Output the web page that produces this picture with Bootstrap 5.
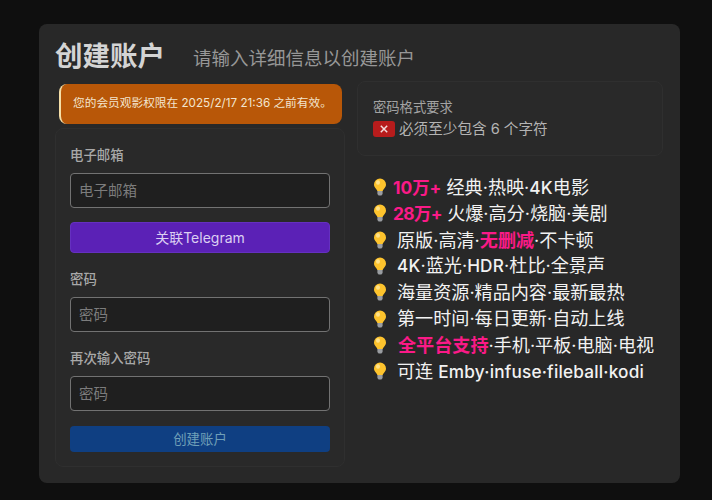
<!DOCTYPE html>
<html lang="zh-CN">
<head>
    <meta charset="UTF-8">
    <meta name="viewport" content="width=device-width, initial-scale=1.0">
    <title>创建账户</title>
    <link href="https://cdn.jsdelivr.net/npm/bootstrap@5.3.0/dist/css/bootstrap.min.css" rel="stylesheet">
    <style>
        html, body {
            height: 500px;
            overflow: hidden;
        }
        body {
            background-color: #0f0f0f;
            font-family: Inter, "Noto Sans CJK SC", sans-serif;
            padding: 24px 32px 17px 39px;
        }
        .panel {
            height: 459px;
            background-color: #282828;
            border-radius: 8px;
            padding: 11px 17px 17px 16px;
        }
        .panel-title {
            font-size: 27.5px;
            line-height: 36px;
            font-weight: 700;
            color: #d4d4d4;
            margin: 0;
        }
        .panel-sub {
            font-size: 18.5px;
            line-height: 36px;
            color: #979797;
            margin-left: 28px;
            padding-top: 5px;
        }
        .cols {
            gap: 12px;
            margin-top: 5px;
        }
        .col-form {
            width: 290px;
            padding-top: 3px;
        }
        .col-info {
            width: 306px;
        }
        .notice {
            margin: 0 3px 4px 4px;
            height: 40px;
            padding-left: 12px;
            background-color: #b85708;
            border-left: 2px solid #f5dfa8;
            border-radius: 8px;
            color: #f3e5cf;
            font-size: 11.7px;
        }
        .sheet {
            background-color: #292929;
            border: 1px solid #2f2f2f;
            border-radius: 8px;
        }
        .form-sheet {
            height: 339px;
            padding: 17px 14px 14px 14px;
        }
        .field-label {
            display: block;
            font-size: 13.4px;
            line-height: 18px;
            font-weight: 500;
            color: #a8a8a8;
            margin-bottom: 9px;
        }
        .field-input {
            height: 35px;
            padding: 0 8px;
            background-color: #1f1f1f;
            border: 1px solid #727272;
            border-radius: 4px;
            color: #ddd;
            font-size: 14.5px;
        }
        .field-input::placeholder {
            color: #7c7c7c;
        }
        .field-input:focus {
            background-color: #1f1f1f;
            border-color: #727272;
            box-shadow: none;
            color: #ddd;
        }
        .btn-telegram {
            height: 31px;
            margin: 14px 0 17px;
            padding: 0;
            background-color: #5b21b6;
            border: 1px solid #6530c0;
            border-radius: 4px;
            color: #dccff2;
            font-size: 14px;
            line-height: 29px;
        }
        .gap-field {
            margin-bottom: 17px;
        }
        .btn-create {
            height: 26px;
            margin-top: 15px;
            padding: 0;
            background-color: #0f3f82;
            border: 0;
            border-radius: 4px;
            color: #6f9fb8;
            font-size: 13.4px;
            line-height: 26px;
        }
        .req-sheet {
            height: 75px;
            padding: 15px 15px 0;
        }
        .req-title {
            font-size: 13.3px;
            line-height: 20px;
            color: #a3a3a3;
        }
        .req-row {
            font-size: 14.6px;
            line-height: 22px;
            color: #b4b4b4;
            margin-top: 1px;
        }
        .req-x {
            width: 22px;
            height: 16px;
            margin-right: 4px;
            background-color: #b71c1c;
            border-radius: 3px;
        }
        .perks {
            margin: 18px 0 0 16px;
            padding: 0;
            list-style: none;
            color: #f2f2f2;
            font-size: 18.1px;
            line-height: 26.3px;
            font-weight: 400;
            white-space: nowrap;
        }
        .perks li {
            height: 26.3px;
        }
        .perks .latin {
            font-size: 17.2px;
            font-weight: 500;
            letter-spacing: .2px;
        }
        .bulb {
            width: 14px;
            height: 18px;
            margin-right: 10px;
            flex: none;
        }
        .bulb-near {
            margin-right: 6px;
        }
        .bulb-far {
            margin-right: 11px;
        }
        .hot {
            color: #fa1a87;
            font-weight: 700;
        }
        .hot-num {
            font-size: 17.4px;
        }
        .hot-tight {
            letter-spacing: -.6px;
        }
    </style>
</head>
<body>
    <svg width="0" height="0" class="position-absolute">
        <symbol id="bulb" viewBox="0 0 14 18">
            <path d="M7 .5a6 6 0 0 0-6 6c0 2.200 1.200 3.300 2.100 4.500.6.800 1.100 1.500 1.200 2h5.400c.1-.5.600-1.200 1.200-2 .9-1.200 2.100-2.300 2.100-4.500a6 6 0 0 0-6-6z" fill="#fdc32d"/>
            <ellipse cx="5" cy="4.500" rx="2" ry="2.300" fill="#ffe28a"/>
            <path d="M4.400 13h5.200v3l-1.200 1.600H5.600L4.400 16z" fill="#9a9da1"/>
        </symbol>
    </svg>

    <main class="panel">
        <div class="d-flex align-items-center">
            <h1 class="panel-title">创建账户</h1>
            <div class="panel-sub">请输入详细信息以创建账户</div>
        </div>
        <div class="d-flex cols">
            <div class="col-form flex-shrink-0">
                <div class="notice d-flex align-items-center">您的会员观影权限在 2025/2/17 21:36 之前有效。</div>
                <form class="sheet form-sheet">
                    <label class="field-label" for="email">电子邮箱</label>
                    <input id="email" type="text" class="form-control field-input" placeholder="电子邮箱">
                    <button type="button" class="btn btn-telegram w-100">关联Telegram</button>
                    <label class="field-label" for="pwd">密码</label>
                    <input id="pwd" type="password" class="form-control field-input gap-field" placeholder="密码">
                    <label class="field-label" for="pwd2">再次输入密码</label>
                    <input id="pwd2" type="password" class="form-control field-input" placeholder="密码">
                    <button type="button" class="btn btn-create w-100">创建账户</button>
                </form>
            </div>
            <div class="col-info flex-shrink-0">
                <div class="sheet req-sheet">
                    <div class="req-title">密码格式要求</div>
                    <div class="req-row d-flex align-items-center">
                        <span class="req-x d-inline-flex align-items-center justify-content-center">
                            <svg width="8" height="8" viewBox="0 0 8 8"><path d="M.8.8l6.400 6.400M7.200.8L.8 7.200" stroke="#f3dcdc" stroke-width="1.500" fill="none"/></svg>
                        </span>
                        必须至少包含 6 个字符
                    </div>
                </div>
                <ul class="perks">
                    <li class="d-flex align-items-center"><svg class="bulb bulb-near"><use href="#bulb"/></svg><span><span class="hot hot-num">10万+</span> 经典·热映·<span class="latin">4K</span>电影</span></li>
                    <li class="d-flex align-items-center"><svg class="bulb bulb-near"><use href="#bulb"/></svg><span><span class="hot hot-num hot-tight">28万+</span> 火爆·高分·烧脑·美剧</span></li>
                    <li class="d-flex align-items-center"><svg class="bulb"><use href="#bulb"/></svg><span>原版·高清·<span class="hot">无删减</span>·不卡顿</span></li>
                    <li class="d-flex align-items-center"><svg class="bulb"><use href="#bulb"/></svg><span><span class="latin">4K</span>·蓝光·<span class="latin">HDR</span>·杜比·全景声</span></li>
                    <li class="d-flex align-items-center"><svg class="bulb"><use href="#bulb"/></svg><span>海量资源·精品内容·最新最热</span></li>
                    <li class="d-flex align-items-center"><svg class="bulb"><use href="#bulb"/></svg><span>第一时间·每日更新·自动上线</span></li>
                    <li class="d-flex align-items-center"><svg class="bulb bulb-far"><use href="#bulb"/></svg><span><span class="hot">全平台支持</span>·手机·平板·电脑·电视</span></li>
                    <li class="d-flex align-items-center"><svg class="bulb"><use href="#bulb"/></svg><span>可连 <span class="latin">Emby·infuse·fileball·kodi</span></span></li>
                </ul>
            </div>
        </div>
    </main>
    <script src="https://cdn.jsdelivr.net/npm/bootstrap@5.3.0/dist/js/bootstrap.bundle.min.js"></script>
</body>
</html>
